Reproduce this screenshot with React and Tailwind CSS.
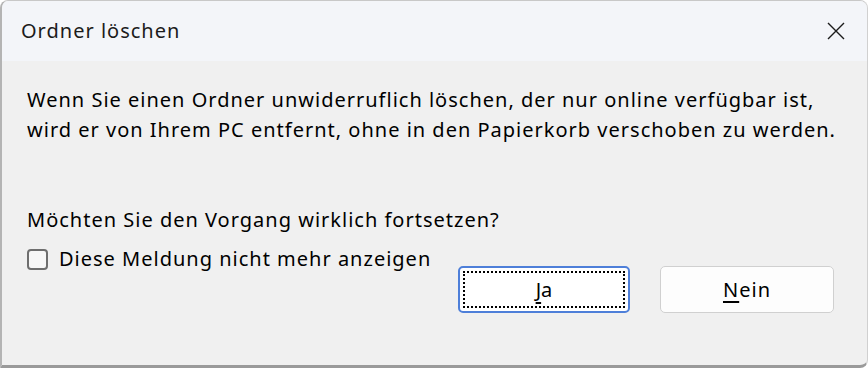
import React from "react";

const App = () => {
  return (
    <div className="w-[868px] h-[368px] bg-white font-['Segoe_UI','Noto_Sans',sans-serif] text-black">
      <div className="w-full h-full flex flex-col rounded-t-[8px] rounded-br-[8px] border-l-2 border-t border-r border-b-[3px] border-l-[#b4b4b4] border-t-[#c8c8c8] border-r-[#d0d0d0] border-b-[#9a9a9a] overflow-hidden bg-[#f0f0f0]">
        {/* Titelleiste */}
        <div className="h-[60px] shrink-0 bg-[#f3f5f9] flex items-center justify-between pl-[19px] pr-[22px]">
          <span className="text-[20px] tracking-[1px] text-[#1b1b1b]">Ordner löschen</span>
          <svg width="18" height="18" viewBox="0 0 18 18" className="text-[#1b1b1b]">
            <path d="M1 1 L17 17 M17 1 L1 17" stroke="currentColor" strokeWidth="1.4" />
          </svg>
        </div>

        {/* Inhalt */}
        <div className="flex-1 flex flex-col pl-[25px] pr-[33px] pt-[24px] text-[20px] tracking-[1px]">
          <p className="leading-[30px] whitespace-nowrap">
            Wenn Sie einen Ordner unwiderruflich löschen, der nur online verfügbar ist,
            <br />
            wird er von Ihrem PC entfernt, ohne in den Papierkorb verschoben zu werden.
          </p>
          <p className="mt-[60px] leading-[30px] whitespace-nowrap">Möchten Sie den Vorgang wirklich fortsetzen?</p>

          <div className="flex items-start mt-[11px]">
            <label className="flex items-center gap-[11px] whitespace-nowrap">
              <span className="w-[21px] h-[21px] rounded-[4px] border-2 border-[#6e6e6e] bg-[#f7f7f7]" />
              <span className="leading-[26px]">Diese Meldung nicht mehr anzeigen</span>
            </label>
          </div>

          <div className="flex gap-[30px] justify-end -mt-[6px] tracking-normal">
            <button className="w-[172px] h-[47px] rounded-[5px] border-2 border-[#4e7fd9] bg-white p-[3px]">
              <span className="flex items-center justify-center w-full h-full border-2 border-dotted border-black">
                <span className="leading-none"><span className="underline underline-offset-[5px]">J</span>a</span>
              </span>
            </button>
            <button className="w-[174px] h-[47px] rounded-[5px] border border-[#d0d0d0] bg-[#fdfdfd] flex items-center justify-center">
              <span className="tracking-[1px]"><span className="underline underline-offset-[4px]">N</span>ein</span>
            </button>
          </div>
        </div>
      </div>
    </div>
  );
};

export default App;
